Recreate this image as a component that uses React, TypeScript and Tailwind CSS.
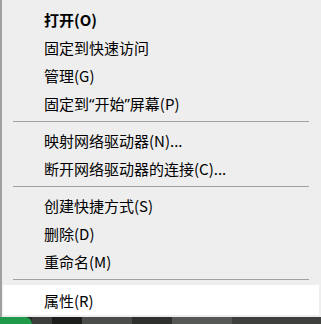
import type { ReactNode } from "react";

type Entry = { label: ReactNode; bold?: boolean; active?: boolean } | "sep";

// narrow Latin quotes, as the reference font draws them
const Q = ({ c }: { c: string }) => (
  <span style={{ fontFamily: '"Noto Sans", sans-serif' }}>{c}</span>
);

const entries: Entry[] = [
  { label: "打开(O)", bold: true },
  { label: "固定到快速访问" },
  { label: "管理(G)" },
  {
    label: (
      <>
        固定到<Q c="“" />开始<Q c="”" />屏幕(P)
      </>
    ),
  },
  "sep",
  { label: "映射网络驱动器(N)..." },
  { label: "断开网络驱动器的连接(C)..." },
  "sep",
  { label: "创建快捷方式(S)" },
  { label: "删除(D)" },
  { label: "重命名(M)" },
  "sep",
  { label: "属性(R)", active: true },
];

export default function App() {
  return (
    <div
      className="w-[321px] h-[324px] overflow-hidden bg-[#2a2c2a] flex flex-col"
      style={{ fontFamily: '"Noto Sans CJK SC", "Noto Sans", sans-serif' }}
    >
      {/* context menu */}
      <div className="h-[317px] shrink-0 bg-[#eeeeee] border-l-2 border-[#a0a0a0] pt-[5px] flex flex-col">
        {entries.map((e, i) =>
          e === "sep" ? (
            <div key={i} className="h-[9px] flex items-center pl-[11px] pr-[12px]">
              <div className="h-px w-full bg-[#a0a0a0]" />
            </div>
          ) : (
            <div
              key={i}
              className={`flex items-center ml-px mr-[2px] pl-[41px] text-[15px] leading-none text-black whitespace-pre ${
                e.active ? "h-[30px] bg-white mt-px" : "h-[28px]"
              } ${e.bold ? "font-bold" : "font-normal"}`}
            >
              {e.label}
            </div>
          )
        )}
      </div>
      {/* desktop wallpaper peeking below */}
      <div className="flex-1 flex">
        <div className="w-[32px] bg-[#1f9a4a] rounded-tr-[20px]" />
        <div className="w-[20px] bg-[#3a3d3a]" />
        <div className="w-[30px] bg-[#1c1e1c]" />
        <div className="w-[50px] bg-[#4a4d4a]" />
        <div className="w-[40px] bg-[#2e302e]" />
        <div className="w-[60px] bg-[#555855]" />
        <div className="flex-1 bg-[#3e403e]" />
      </div>
    </div>
  );
}
